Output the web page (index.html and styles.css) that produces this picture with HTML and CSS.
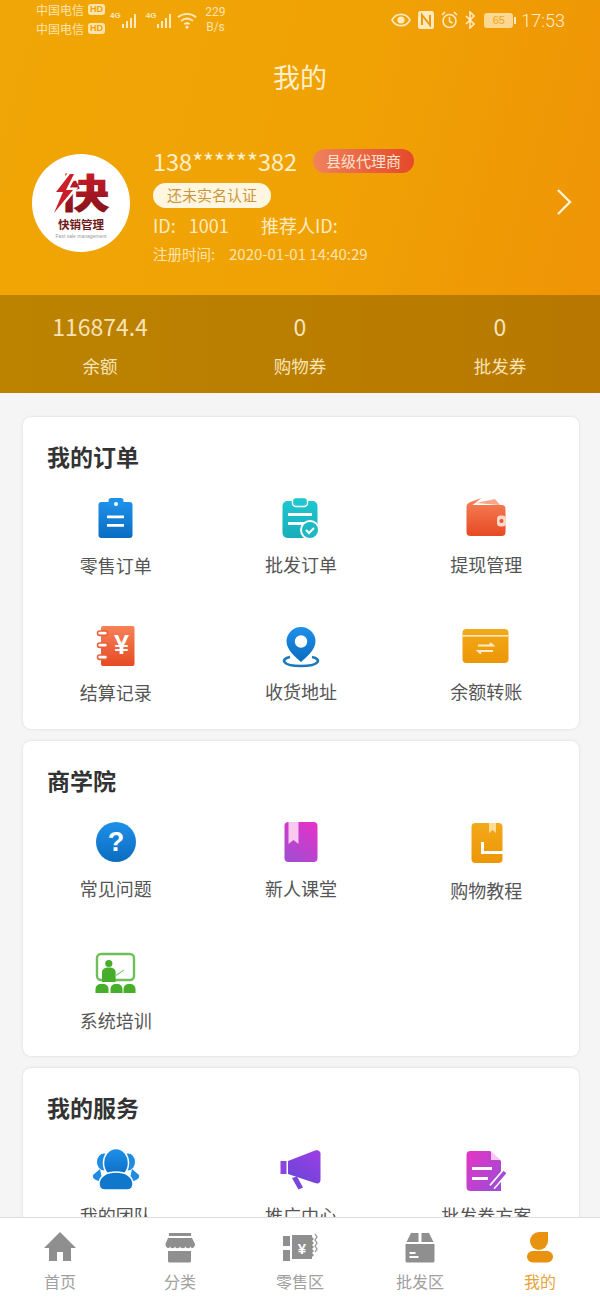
FILE: index.html
```html
<!DOCTYPE html>
<html lang="zh-CN">
<head>
<meta charset="utf-8">
<title>我的</title>
<link rel="stylesheet" href="styles.css">
</head>
<body>
<svg class="defs" aria-hidden="true">
  <defs>
    <linearGradient id="gBlue" x1="0" y1="0" x2="0" y2="1"><stop offset="0" stop-color="#1E90EA"/><stop offset="1" stop-color="#0B6CC0"/></linearGradient>
    <linearGradient id="gTeal" x1="0" y1="0" x2="0" y2="1"><stop offset="0" stop-color="#1FC6CF"/><stop offset="1" stop-color="#17AEBB"/></linearGradient>
    <linearGradient id="gRed" x1="0" y1="0" x2="0" y2="1"><stop offset="0" stop-color="#F68258"/><stop offset="1" stop-color="#E64A24"/></linearGradient>
    <linearGradient id="gOrange" x1="0" y1="0" x2="0" y2="1"><stop offset="0" stop-color="#F2A91A"/><stop offset="1" stop-color="#EC9606"/></linearGradient>
    <linearGradient id="gPink" x1="0.8" y1="0" x2="0.2" y2="1"><stop offset="0" stop-color="#E333C8"/><stop offset="1" stop-color="#A24CD2"/></linearGradient>
    <linearGradient id="gViolet" x1="0.8" y1="0" x2="0.2" y2="1"><stop offset="0" stop-color="#9A3FE4"/><stop offset="1" stop-color="#6A45D8"/></linearGradient>
    <linearGradient id="gDoc" x1="0" y1="0" x2="1" y2="1"><stop offset="0" stop-color="#E635C4"/><stop offset="1" stop-color="#9A4CD8"/></linearGradient>
    <linearGradient id="gLogo" x1="0" y1="0" x2="0" y2="1"><stop offset="0" stop-color="#D9202C"/><stop offset="1" stop-color="#7E1019"/></linearGradient>
  </defs>
</svg>
<div class="page">
  <header class="hero">
    <div class="status">
      <div class="status-left">
        <div class="carriers">
          <div class="carrier">中国电信<span class="hd">HD</span></div>
          <div class="carrier">中国电信<span class="hd">HD</span></div>
        </div>
        <div class="signal"><span class="net">4G</span>
          <svg width="17" height="18" viewBox="0 0 17 18"><path d="M1 13h2v4H1zM5 10h2v7H5zM9 7h2v10H9zM13 3h2v14h-2z" fill="#FFE9BE"/></svg>
        </div>
        <div class="signal signal-second"><span class="net">4G</span>
          <svg width="17" height="18" viewBox="0 0 17 18"><path d="M1 13h2v4H1zM5 10h2v7H5zM9 7h2v10H9zM13 3h2v14h-2z" fill="#FFE9BE"/></svg>
        </div>
        <svg class="wifi" width="20" height="20" viewBox="0 0 22 20"><g fill="none" stroke="#FFE9BE" stroke-width="2"><path d="M1 7c6-5 14-5 20 0"/><path d="M4.500 11c4-3.200 9-3.200 13 0"/><path d="M8 14.500c2-1.300 4-1.300 6 0"/></g><circle cx="11" cy="18" r="1.600" fill="#FFE9BE"/></svg>
        <div class="speed"><span>229</span><span>B/s</span></div>
      </div>
      <div class="status-right">
        <svg width="20" height="14" viewBox="0 0 20 14"><path d="M1 7c4-7.500 14-7.500 18 0-4 7.500-14 7.500-18 0z" fill="none" stroke="#FFE9BE" stroke-width="1.600"/><circle cx="10" cy="7" r="3.600" fill="#FFE9BE"/></svg>
        <svg width="16" height="18" viewBox="0 0 16 18"><rect x="0" y="0" width="16" height="18" rx="2.500" fill="#FFE9BE"/><path d="M4 14V4l8 10V4" fill="none" stroke="#EE9A08" stroke-width="2"/></svg>
        <svg width="17" height="18" viewBox="0 0 17 18"><circle cx="8.500" cy="10" r="6.500" fill="none" stroke="#FFE9BE" stroke-width="1.600"/><path d="M8.500 6v4.500l3 1.500M1 4l3-3M16 4l-3-3" fill="none" stroke="#FFE9BE" stroke-width="1.500"/></svg>
        <svg width="10" height="18" viewBox="0 0 10 18"><path d="M1 5l8 8-4 4V1l4 4-8 8" fill="none" stroke="#FFE9BE" stroke-width="1.600"/></svg>
        <div class="battery"><span class="battery-level">65</span><i class="battery-cap"></i></div>
        <span class="clock">17:53</span>
      </div>
    </div>
    <h1 class="page-title">我的</h1>
    <div class="profile">
      <div class="avatar">
        <svg width="98" height="98" viewBox="0 0 98 98">
          <text transform="translate(52 54) scale(1.300 1)" text-anchor="middle" class="logo-char" fill="url(#gLogo)">快</text>
          <path d="M38 20 L24 38 L31 38 L22 59 L41 36 L34 36 L42 20 Z" fill="#C81F2A" stroke="#fff" stroke-width="5" paint-order="stroke"/>
          <text x="49" y="75" text-anchor="middle" class="logo-name">快销管理</text>
          <text x="49" y="84" text-anchor="middle" class="logo-sub">Fast sale management</text>
        </svg>
      </div>
      <div class="profile-info">
        <div class="phone-row"><span class="phone">138******382</span><span class="level">县级代理商</span></div>
        <div class="cert-row"><span class="cert">还未实名认证</span></div>
        <div class="id-row"><span class="id-a">ID:<span class="id-num">1001</span></span><span>推荐人ID:</span></div>
        <div class="date-row"><span class="date-a">注册时间:</span><span class="date-b">2020-01-01 14:40:29</span></div>
      </div>
      <svg class="chevron" width="18" height="28" viewBox="0 0 18 28"><path d="M3 2l12 12L3 26" fill="none" stroke="#FFF3D8" stroke-width="2.400"/></svg>
    </div>
  </header>

  <section class="stats">
    <div class="stat"><span class="stat-value">116874.4</span><span class="stat-label">余额</span></div>
    <div class="stat"><span class="stat-value">0</span><span class="stat-label">购物券</span></div>
    <div class="stat"><span class="stat-value">0</span><span class="stat-label">批发券</span></div>
  </section>

  <main class="content">
    <section class="card card-orders">
      <h2 class="card-title">我的订单</h2>
      <div class="grid">
        <a class="item">
          <svg class="icon" viewBox="0 0 48 48"><rect x="6.500" y="8" width="34" height="36" rx="3" fill="url(#gBlue)"/><rect x="16.500" y="4" width="15" height="9" rx="3" fill="#1E90EA"/><circle cx="24" cy="10" r="2" fill="#fff"/><path d="M15 21.500h17v2.800H15zM15 30h17v2.800H15z" fill="#fff"/></svg>
          <span class="label low">零售订单</span>
        </a>
        <a class="item">
          <svg class="icon" viewBox="0 0 48 48"><rect x="5.500" y="7" width="35" height="37" rx="5" fill="url(#gTeal)"/><rect x="15.500" y="3.500" width="15" height="9" rx="3.500" fill="#1FC6CF" stroke="#fff" stroke-width="1.400"/><path d="M11 19h24v3H11zM11 28h16v3H11z" fill="#fff"/><circle cx="33" cy="36" r="10" fill="#fff"/><circle cx="33" cy="36" r="8" fill="#1FB9C4"/><path d="M29 36l3 3 5-5" fill="none" stroke="#fff" stroke-width="2"/></svg>
          <span class="label">批发订单</span>
        </a>
        <a class="item">
          <svg class="icon" viewBox="0 0 48 48"><path d="M14 9 L33 5 L38 11 Z" fill="#F5A78A"/><path d="M4.500 13c0-3 2-4 4-5l11-4-9 7h29a4 4 0 0 1 4 4v23a4 4 0 0 1-4 4h-31a4 4 0 0 1-4-4z" fill="url(#gRed)"/><rect x="35" y="21.500" width="9" height="11" rx="3.500" fill="#FBD8CA"/><circle cx="39.500" cy="27" r="2" fill="#E8552F"/></svg>
          <span class="label">提现管理</span>
        </a>
        <a class="item">
          <svg class="icon" viewBox="0 0 48 48"><rect x="9" y="5" width="33.500" height="40" rx="2" fill="url(#gRed)"/><g fill="#fff" stroke="#E8603A" stroke-width="1.600"><rect x="5.500" y="10" width="10" height="4.400" rx="2.200"/><rect x="5.500" y="22" width="10" height="4.400" rx="2.200"/><rect x="5.500" y="34" width="10" height="4.400" rx="2.200"/></g><text x="29.500" y="33" text-anchor="middle" class="yen-lg">¥</text></svg>
          <span class="label low">结算记录</span>
        </a>
        <a class="item">
          <svg class="icon" viewBox="0 0 48 48"><path d="M13 36C3 38 5 45 24 45s21-7 11-9" fill="none" stroke="#1877BD" stroke-width="2.600"/><path d="M24 6a14.500 14.500 0 0 1 14.500 14.500c0 9-10 16-14.500 20.500-4.500-4.500-14.500-11.500-14.500-20.500A14.500 14.500 0 0 1 24 6z" fill="url(#gBlue)"/><circle cx="24" cy="20.500" r="6.200" fill="#fff"/></svg>
          <span class="label">收货地址</span>
        </a>
        <a class="item">
          <svg class="icon" viewBox="0 0 48 48"><rect x="0.500" y="8" width="46" height="34" rx="4" fill="url(#gOrange)"/><rect x="0.500" y="14" width="46" height="1.600" fill="#FFE9BE"/><path d="M16 24.500h15l-3-2.500M31 30H16l3 2.500" fill="none" stroke="#FFEBC4" stroke-width="1.800"/></svg>
          <span class="label">余额转账</span>
        </a>
      </div>
    </section>

    <section class="card card-school">
      <h2 class="card-title">商学院</h2>
      <div class="grid grid-wide">
        <a class="item">
          <svg class="icon" viewBox="0 0 48 48"><circle cx="24" cy="24" r="20" fill="url(#gBlue)"/><text x="24" y="33" text-anchor="middle" class="q-mark">?</text></svg>
          <span class="label">常见问题</span>
        </a>
        <a class="item">
          <svg class="icon" viewBox="0 0 48 48"><rect x="7.500" y="4" width="33" height="40" rx="4" fill="url(#gPink)"/><path d="M11.500 4h10v22l-5-4-5 4z" fill="#F9C9F0"/></svg>
          <span class="label">新人课堂</span>
        </a>
        <a class="item">
          <svg class="icon" viewBox="0 0 48 48"><rect x="9.500" y="5" width="31" height="40" rx="4" fill="url(#gOrange)"/><path d="M27 5h7v10l-3.500-3-3.500 3z" fill="#FFDD99"/><path d="M20.500 24v10.500h21" fill="none" stroke="#fff" stroke-width="3"/></svg>
          <span class="label lower">购物教程</span>
        </a>
        <a class="item">
          <svg class="icon" viewBox="0 0 48 48"><rect x="5" y="4" width="37" height="26" rx="4" fill="#fff" stroke="#6FBF58" stroke-width="2.400"/><circle cx="16.800" cy="13.500" r="3.600" fill="#46AE2A"/><path d="M10 22.500c0-3.500 2.500-5 6.800-5s6.800 1.500 6.800 5V32H10z" fill="#46AE2A"/><path d="M23 26l9-6" stroke="#8CCB74" stroke-width="1.200"/><g fill="#46AE2A"><path d="M3.500 43v-4a5 5 0 0 1 5-5h3a5 5 0 0 1 5 5v4z"/><path d="M18.500 43v-4a5 5 0 0 1 5-5h2a5 5 0 0 1 5 5v4z"/><path d="M31.500 43v-4a5 5 0 0 1 5-5h2a5 5 0 0 1 5 5v4z"/></g></svg>
          <span class="label">系统培训</span>
        </a>
      </div>
    </section>

    <section class="card card-service">
      <h2 class="card-title">我的服务</h2>
      <div class="grid">
        <a class="item">
          <svg class="icon" viewBox="0 0 48 48"><g fill="#1E8CE0"><ellipse cx="12" cy="17" rx="7" ry="8.500"/><ellipse cx="36" cy="17" rx="7" ry="8.500"/><path d="M8 24L1 30Q0 33 4 35L11 38z"/><path d="M40 24l7 6Q48 33 44 35L37 38z"/></g><ellipse cx="24" cy="18" rx="12.500" ry="14.500" fill="url(#gBlue)" stroke="#fff" stroke-width="1.500"/><path d="M7 39c0-8 8-12 17-12s17 4 17 12c0 4-2.500 6-6 6H13c-3.500 0-6-2-6-6z" fill="#0F78CC" stroke="#fff" stroke-width="1.500"/></svg>
          <span class="label">我的团队</span>
        </a>
        <a class="item">
          <svg class="icon" viewBox="0 0 48 48"><rect x="3.500" y="16" width="6" height="13" fill="#8D42E2"/><path d="M11 16L38 5.500c3-1 5.500.5 5.500 3V35c0 3-2.500 4-5.500 3L11 29z" fill="url(#gViolet)"/><path d="M15 33l5-1.500 6 11-4.500 2z" fill="#7A45DC"/></svg>
          <span class="label">推广中心</span>
        </a>
        <a class="item">
          <svg class="icon" viewBox="0 0 48 48"><path d="M8.500 6H28l11 10v30H8.500a4 4 0 0 1-4-4V10a4 4 0 0 1 4-4z" fill="url(#gDoc)"/><path d="M29 6l9 9h-9z" fill="#F7C6EE"/><path d="M10 22h20v3H10zM10 32h16v3H10z" fill="#fff"/><path d="M43 27L30 42" stroke="#fff" stroke-width="7"/><path d="M43 27L31 41l-3 4" stroke="#A54BD6" stroke-width="3.600"/></svg>
          <span class="label">批发券方案</span>
        </a>
      </div>
    </section>
  </main>

  <nav class="tabbar">
    <a class="tab">
      <svg class="tab-icon" viewBox="0 0 36 32"><path d="M18 1L34 17h-5v13h-8v-9h-6v9H7V17H2z" fill="#8F8F8F"/></svg>
      <span class="tab-label">首页</span>
    </a>
    <a class="tab">
      <svg class="tab-icon" viewBox="0 0 36 32"><path d="M7 2h22v3H7zM6 20h23v10a1.500 1.500 0 0 1-1.500 1.500h-20A1.500 1.500 0 0 1 6 30z" fill="#8F8F8F"/><path d="M6 7h24l3 6c0 5-4.500 5-4.500 2 0 3-5 3-5 0 0 3-5.500 3-5.500 0 0 3-5 3-5 0 0 3-5 3-5 0 0 3-4.500 3-4.500-2z" fill="#8F8F8F"/></svg>
      <span class="tab-label">分类</span>
    </a>
    <a class="tab">
      <svg class="tab-icon" viewBox="0 0 36 32"><path d="M1 5h7v10H1zM1 19h7v11H1z" fill="#8F8F8F"/><path d="M10 4h20v2l2 2-2 2 2 2-2 2 2 2-2 2 2 2-2 2 2 2-2 2v2H10z" fill="#8F8F8F"/><path d="M33 3l2 3-2 3 2 3-2 3 2 3-2 3" fill="none" stroke="#8F8F8F" stroke-width="1.200"/><text x="20" y="23" text-anchor="middle" class="yen-sm">¥</text></svg>
      <span class="tab-label">零售区</span>
    </a>
    <a class="tab">
      <svg class="tab-icon" viewBox="0 0 36 32"><path d="M9 2h7.500v9H4.500zM19.500 2H27l4.500 9h-12zM3.500 13h29v17a1.500 1.500 0 0 1-1.500 1.500H5A1.500 1.500 0 0 1 3.500 30z" fill="#8F8F8F"/><path d="M7.500 21h6v2h-6zM7.500 25h9v2h-9z" fill="#fff"/></svg>
      <span class="tab-label">批发区</span>
    </a>
    <a class="tab tab-active">
      <svg class="tab-icon" viewBox="0 0 36 32"><path d="M26 1v9a9 9 0 1 1-9-9z" fill="#E8920F"/><rect x="5" y="20" width="26" height="11.500" rx="5.700" fill="#E8920F"/></svg>
      <span class="tab-label">我的</span>
    </a>
  </nav>
</div>
</body>
</html>
```
FILE: styles.css
```css
* { box-sizing: border-box; }
html, body { margin: 0; padding: 0; }
body {
  font-family: "Noto Sans CJK SC", "Noto Sans", sans-serif;
  background: #f5f5f5;
}
.defs { display: block; width: 0; height: 0; }
.page {
  position: relative;
  width: 600px;
  height: 1301px;
  overflow: hidden;
  background: #f5f5f5;
}

/* hero */
.hero {
  height: 295px;
  background: linear-gradient(105deg, #F0A606 0%, #F0A204 55%, #EF9406 100%);
  color: #FFEFCB;
}
.status {
  height: 40px;
  padding: 0 35px 0 36px;
  display: flex;
  justify-content: space-between;
}
.status-left { display: flex; align-items: flex-start; gap: 5px; }
.carriers { display: flex; flex-direction: column; }
.carrier {
  display: flex;
  align-items: center;
  gap: 4px;
  height: 19px;
  font-size: 12px;
  color: #FFE3AC;
  white-space: nowrap;
}
.hd {
  font-family: "Liberation Sans", sans-serif;
  font-size: 9px;
  font-weight: 700;
  line-height: 11px;
  padding: 0 2px;
  border-radius: 3px;
  background: #FFE3AC;
  color: #EFA204;
}
.signal { display: flex; align-items: flex-start; padding-top: 11px; }
.signal-second { margin-left: 3px; }
.net {
  font-family: "Liberation Sans", sans-serif;
  font-size: 8px;
  font-weight: 700;
  color: #FFE9BE;
  line-height: 9px;
}
.wifi { margin-top: 10px; margin-left: -1px; }
.speed {
  display: flex;
  flex-direction: column;
  font-family: Roboto, sans-serif;
  font-size: 12px;
  line-height: 15px;
  color: #FFE3AC;
  margin-left: 3px;
  margin-top: 5px;
  align-items: center;
}
.status-right { display: flex; align-items: center; gap: 7px; height: 40px; }
.battery {
  display: flex;
  align-items: center;
  width: 32px;
  height: 15px;
  margin-left: 2px;
}
.battery-level {
  flex: 1;
  height: 15px;
  font-family: "Liberation Sans", sans-serif;
  font-size: 11px;
  line-height: 15px;
  text-align: center;
  color: #F1A71B;
  background: #FFE3AC;
  border-radius: 3px;
  opacity: 0.85;
}
.battery-cap { width: 2px; height: 7px; margin-left: 1px; background: #FFE9BE; }
.clock {
  font-family: Roboto, sans-serif;
  font-size: 18px;
  font-weight: 300;
  color: #FFEFCB;
  margin-left: -2px;
}
.page-title {
  margin: 0;
  height: 76px;
  padding-top: 17px;
  text-align: center;
  font-size: 27px;
  font-weight: 400;
  line-height: 40px;
}
.profile {
  display: flex;
  align-items: flex-start;
  padding: 0 27px 0 32px;
}
.avatar {
  flex: none;
  width: 98px;
  height: 98px;
  margin-top: 38px;
  border-radius: 50%;
  background: #fff;
  overflow: hidden;
}
.avatar svg { display: block; }
.logo-char { font-size: 40px; font-weight: 900; }
.logo-name { font-size: 11.500px; font-weight: 700; fill: #6E1A1A; }
.logo-sub { font-family: "Liberation Sans", sans-serif; font-size: 5px; fill: #999; }
.profile-info { flex: 1; margin-left: 23px; margin-top: 28px; }
.phone-row { display: flex; align-items: center; height: 33px; }
.phone { font-size: 23.500px; line-height: 32px; color: #FFEFCB; }
.level {
  margin-left: 16px;
  height: 24px;
  padding: 0 13px;
  font-size: 15px;
  line-height: 23px;
  border-radius: 12px;
  background: linear-gradient(90deg, #F0825C, #E4492A);
  color: #FFE3D0;
}
.cert-row { display: flex; margin-top: 6px; }
.cert {
  height: 25px;
  padding: 0 14px;
  font-size: 15px;
  line-height: 24px;
  border-radius: 13px;
  background: #FFF6E2;
  color: #C9963A;
}
.id-row {
  display: flex;
  margin-top: 3px;
  height: 28px;
  font-size: 18px;
  line-height: 28px;
  color: #FFEBC2;
}
.id-a { width: 108px; }
.id-num { margin-left: 13px; }
.date-row {
  display: flex;
  align-items: center;
  height: 28px;
  font-size: 14.500px;
  color: #FFE3AC;
}
.date-a { width: 76px; }
.date-b { font-size: 15px; }
.chevron { flex: none; margin-top: 72px; }

/* stats */
.stats {
  display: flex;
  height: 98px;
  background: linear-gradient(90deg, #BC8300, #B87800);
  color: #F8E4B6;
}
.stat {
  flex: 1;
  display: flex;
  flex-direction: column;
  align-items: center;
}
.stat-value { margin-top: 14px; font-size: 23px; line-height: 34px; }
.stat-label { margin-top: 6px; font-size: 17.500px; line-height: 34px; }

/* cards */
.content {
  padding: 24px 21px 0 23px;
  display: flex;
  flex-direction: column;
  gap: 12px;
}
.card {
  background: #fff;
  border-radius: 8px;
  box-shadow: 0 0 3px rgba(0, 0, 0, 0.12);
  padding-top: 24px;
  padding-bottom: 24px;
}
.card-school { padding-bottom: 22px; }
.card-title {
  margin: 0 0 23px 24px;
  font-size: 23px;
  font-weight: 700;
  line-height: 30px;
  color: #333;
}
.grid {
  display: grid;
  grid-template-columns: repeat(3, 1fr);
  row-gap: 43px;
}
.grid-wide { row-gap: 48px; }
.item {
  display: flex;
  flex-direction: column;
  align-items: center;
}
.icon { display: block; width: 48px; height: 48px; }
.label {
  margin-top: 9px;
  margin-bottom: 1px;
  font-size: 18px;
  line-height: 26px;
  color: #555;
  white-space: nowrap;
}
.label.low { transform: translateY(1px); }
.label.lower { transform: translateY(2px); }
.yen-lg { font-family: "Liberation Sans", sans-serif; font-size: 27px; font-weight: 700; fill: #fff; }
.q-mark { font-family: "Liberation Sans", sans-serif; font-size: 27px; font-weight: 700; fill: #fff; }
.yen-sm { font-family: "Liberation Sans", sans-serif; font-size: 15px; font-weight: 700; fill: #fff; }

/* tab bar */
.tabbar {
  position: absolute;
  left: 0;
  right: 0;
  bottom: 0;
  height: 84px;
  display: flex;
  background: #fff;
  border-top: 1px solid #dcdcdc;
}
.tab {
  flex: 1;
  display: flex;
  flex-direction: column;
  align-items: center;
  padding-top: 13px;
}
.tab-icon { display: block; width: 36px; height: 32px; }
.tab-label {
  margin-top: 6px;
  font-size: 16px;
  line-height: 24px;
  color: #A0A0A0;
}
.tab-active .tab-label { color: #E8A33A; }
```
